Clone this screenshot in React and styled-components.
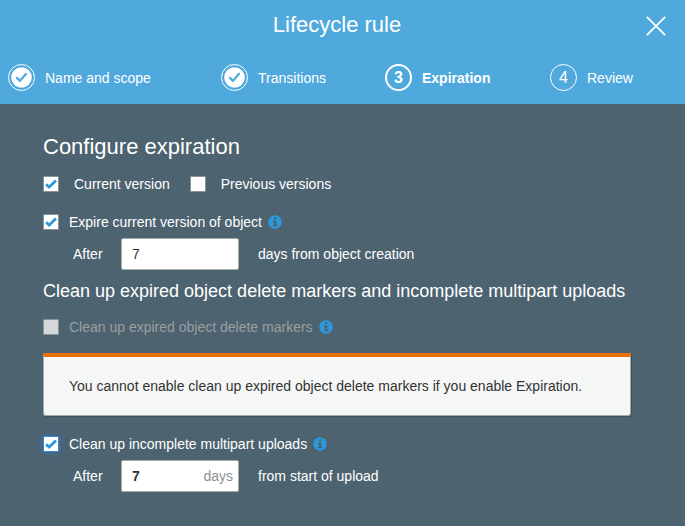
import React from "react";
import styled, { createGlobalStyle, css } from "styled-components";

const GlobalStyle = createGlobalStyle`
  * { box-sizing: border-box; }
  body {
    margin: 0;
    background: #4d6370;
    color: #fff;
    font: 14px/20px "Liberation Sans", Arial, sans-serif;
  }
`;

const Dialog = styled.main`
  width: 685px;
  height: 526px;
  overflow: hidden;
  background: #4d6370;
`;

const Header = styled.header`
  height: 104px;
  background: #4fa9dd;
`;

const TitleBar = styled.div`
  display: grid;
  grid-template-columns: 58px 1fr 58px;
  align-items: center;
  height: 51px;
`;

const Title = styled.h1`
  grid-column: 2;
  margin: 0 0 1px;
  padding-right: 11px;
  text-align: center;
  font-size: 22px;
  line-height: 30px;
  font-weight: 400;
`;

const CloseButton = styled.button`
  display: flex;
  justify-content: center;
  padding: 0;
  border: 0;
  background: none;
  color: #fff;
`;

const Steps = styled.nav`
  display: grid;
  grid-template-columns: 213px 164px 165px 1fr;
  height: 53px;
  padding-left: 8px;
`;

const Step = styled.div`
  display: flex;
  align-items: center;
  gap: 10px;
  height: 53px;
  font-weight: ${(p) => (p.$current ? 700 : 400)};
`;

const StepCircle = styled.span`
  display: flex;
  align-items: center;
  justify-content: center;
  width: 27px;
  height: 27px;
  border: ${(p) => (p.$current ? 2 : 1)}px solid #fff;
  border-radius: 50%;
  font-size: 16px;
  line-height: 24px;
`;

const Content = styled.section`
  width: 631px;
  padding: 27px 0 0 43px;
`;

const Heading = styled.h2`
  margin: 0;
  height: 32px;
  font-size: 22px;
  line-height: 32px;
  font-weight: 400;
`;

const SubHeading = styled.h3`
  margin: 9px 0 14px;
  font-size: 18px;
  line-height: 24px;
  font-weight: 400;
  white-space: nowrap;
`;

const OptionRow = styled.div`
  display: flex;
  align-items: center;
  height: 20px;
  margin-top: ${(p) => p.$top || 0}px;
`;

const Option = styled.label`
  display: flex;
  align-items: center;
  gap: ${(p) => (p.$wide ? 15 : 10)}px;
  margin-right: ${(p) => (p.$wide ? 20 : 6)}px;
  color: ${(p) => (p.$disabled ? "#9a9f9f" : "#fff")};
`;

const Box = styled.span`
  display: flex;
  width: 16px;
  height: 16px;
  border: 1px solid #879596;
  border-radius: 1px;
  background: #fff;
  ${(p) => p.$disabled && css`background: #d5d8d8;`}
  ${(p) => p.$focused && css`
    border-color: #2f86dc;
    box-shadow: 0 0 8px rgba(56, 139, 255, 0.3);
  `}
`;

const FieldRow = styled.div`
  display: grid;
  grid-template-columns: 78px 118px 1fr;
  align-items: center;
  height: 32px;
  margin-top: 6px;
`;

const FieldLabel = styled.span`
  padding-left: 30px;
`;

const Field = styled.div`
  display: flex;
  align-items: center;
  justify-content: space-between;
  height: 32px;
  padding: 0 5px 0 10px;
  border: 1px solid #a2aaab;
  border-radius: 2px;
  background: #fff;
  color: #333;
  font-weight: ${(p) => (p.$bold ? 700 : 400)};
`;

const Unit = styled.span`
  color: #8b9292;
  font-weight: 400;
`;

const FieldSuffix = styled.span`
  padding-left: 19px;
`;

const Notice = styled.div`
  height: 63px;
  margin: 16px 0 18px;
  padding: 15px 25px 0;
  border: 1px solid #a2aaab;
  border-top: 4px solid #eb6f07;
  border-radius: 0 0 3px 3px;
  background: #f5f7f6;
  color: #333;
  line-height: 28px;
  box-shadow: 1px 1px 1px rgba(0, 0, 0, 0.22);
`;

function Checkbox({ checked, disabled, focused }) {
  return (
    <Box $disabled={disabled} $focused={focused} role="checkbox" aria-checked={!!checked}>
      {checked && (
        <svg width="14" height="14" viewBox="0 0 14 14">
          <path d="M2.1 7.2 5.1 10 12 3.4" fill="none" stroke="#2e98dc" strokeWidth="2.8" />
        </svg>
      )}
    </Box>
  );
}

function InfoIcon() {
  return (
    <svg width="14" height="14" viewBox="0 0 14 14">
      <circle cx="7" cy="7" r="6.75" fill="#2e98dc" />
      <path d="M6 2.2h2.3v2H6zM4.9 5.5h3.4v4.2h1.1v1.5H4.9V9.7H6V7H4.9z" fill="#4d6370" />
    </svg>
  );
}

function DoneIcon() {
  return (
    <svg width="21" height="21" viewBox="0 0 21 21">
      <circle cx="10.5" cy="10.5" r="10.3" fill="#fff" />
      <path d="m5.9 10.9 3.1 3 6-7.1" fill="none" stroke="#4fa9dd" strokeWidth="2.2" strokeLinecap="round" strokeLinejoin="round" />
    </svg>
  );
}

const steps = [
  { name: "Name and scope", done: true },
  { name: "Transitions", done: true },
  { name: "Expiration", current: true },
  { name: "Review" },
];

export default function App() {
  return (
    <>
      <GlobalStyle />
      <Dialog>
        <Header>
          <TitleBar>
            <Title>Lifecycle rule</Title>
            <CloseButton aria-label="Close">
              <svg width="20" height="20" viewBox="0 0 20 20">
                <path d="m.8.8 18.4 18.4M19.2.8.8 19.2" stroke="currentColor" strokeWidth="1.8" />
              </svg>
            </CloseButton>
          </TitleBar>
          <Steps>
            {steps.map((step, i) => (
              <Step key={step.name} $current={step.current}>
                <StepCircle $current={step.current}>{step.done ? <DoneIcon /> : i + 1}</StepCircle>
                {step.name}
              </Step>
            ))}
          </Steps>
        </Header>
        <Content>
          <Heading>Configure expiration</Heading>
          <OptionRow $top={11}>
            <Option $wide><Checkbox checked />Current version</Option>
            <Option $wide><Checkbox />Previous versions</Option>
          </OptionRow>
          <OptionRow $top={18}>
            <Option><Checkbox checked />Expire current version of object</Option>
            <InfoIcon />
          </OptionRow>
          <FieldRow>
            <FieldLabel>After</FieldLabel>
            <Field>7</Field>
            <FieldSuffix>days from object creation</FieldSuffix>
          </FieldRow>
          <SubHeading>Clean up expired object delete markers and incomplete multipart uploads</SubHeading>
          <OptionRow>
            <Option $disabled><Checkbox disabled />Clean up expired object delete markers</Option>
            <InfoIcon />
          </OptionRow>
          <Notice>You cannot enable clean up expired object delete markers if you enable Expiration.</Notice>
          <OptionRow>
            <Option><Checkbox checked focused />Clean up incomplete multipart uploads</Option>
            <InfoIcon />
          </OptionRow>
          <FieldRow>
            <FieldLabel>After</FieldLabel>
            <Field $bold>7<Unit>days</Unit></Field>
            <FieldSuffix>from start of upload</FieldSuffix>
          </FieldRow>
        </Content>
      </Dialog>
    </>
  );
}
